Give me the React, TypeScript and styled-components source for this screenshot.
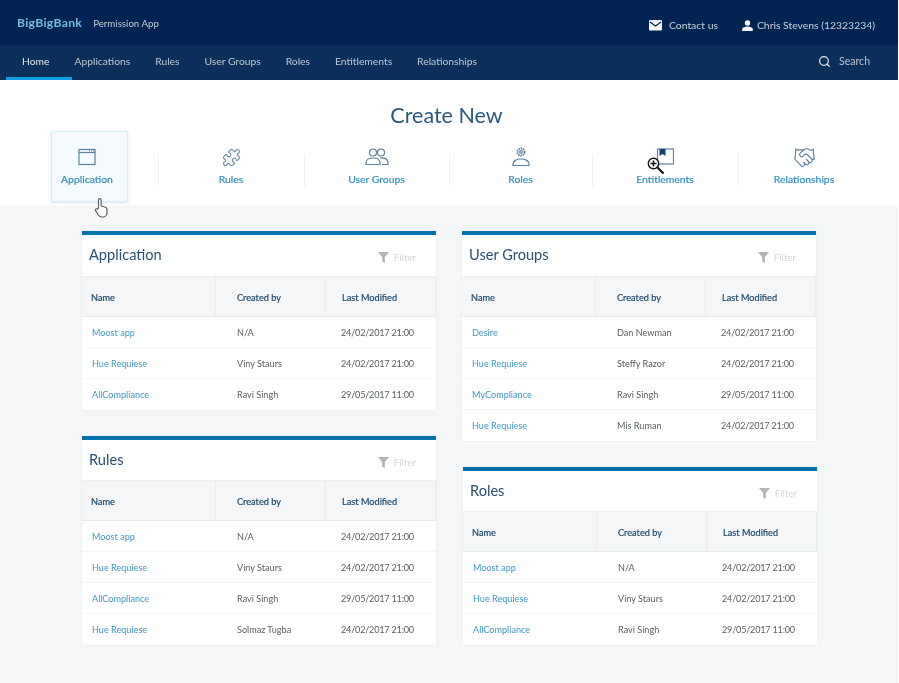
import React from "react";
import styled, { createGlobalStyle } from "styled-components";
import { Search, Handshake, Puzzle } from "lucide-react";

const Global = createGlobalStyle`
  html, body { margin: 0; padding: 0; background: #fff; }
  body { font-family: "Lato", "Open Sans", "Liberation Sans", sans-serif; overflow: hidden; }
  * { box-sizing: border-box; }
`;

const Page = styled.div`
  position: relative;
  width: 898px;
  height: 683px;
  background: #f5f6f7;
  overflow: hidden;
  filter: blur(0.35px);
`;

const TopBar = styled.header`
  height: 45px;
  background: #012452;
  display: flex;
  align-items: center;
  justify-content: space-between;
  padding: 0 23px 0 17px;
`;

const Brand = styled.div`
  display: flex;
  align-items: baseline;
  gap: 11px;
`;

const BrandName = styled.span`
  color: #76bbe4;
  font-size: 12.2px;
  font-weight: 700;
  letter-spacing: 0.3px;
`;

const BrandSub = styled.span`
  color: #c2cedb;
  font-size: 9.7px;
`;

const TopLinks = styled.div`
  display: flex;
  align-items: center;
  gap: 24px;
  margin-top: 5px;
`;

const TopLink = styled.div<{ $gap: number }>`
  display: flex;
  align-items: center;
  gap: ${(p) => p.$gap}px;
  color: #c8d3df;
  font-size: 10.4px;
`;

const NavBar = styled.nav`
  height: 35px;
  background: #0a3059;
  display: flex;
  justify-content: space-between;
  padding: 0 28px 0 6px;
`;

const NavItems = styled.div`
  display: flex;
`;

const NavItem = styled.div<{ $active?: boolean }>`
  height: 35px;
  display: flex;
  align-items: center;
  white-space: nowrap;
  padding: 0 ${(p) => (p.$active ? "23px" : "25px")} 1px ${(p) => (p.$active ? "16px" : "0")};
  margin-right: ${(p) => (p.$active ? "2px" : "0")};
  color: ${(p) => (p.$active ? "#e3e9ef" : "#bcc9d6")};
  font-size: 10.3px;
  border-bottom: 3px solid ${(p) => (p.$active ? "#0fa0e4" : "transparent")};
`;

const SearchBox = styled.div`
  display: flex;
  align-items: center;
  gap: 8px;
  color: #b7c5d3;
  font-size: 10.5px;
  margin-top: -3px;
  svg { color: #e3e9ef; }
`;

const CreatePanel = styled.section`
  height: 126px;
  background: #fff;
  display: flex;
  flex-direction: column;
  align-items: stretch;
`;

const CreateTitle = styled.h1`
  margin: 0;
  height: 51px;
  padding-top: 18px;
  padding-right: 5px;
  text-align: center;
  font-size: 21.5px;
  line-height: 34px;
  font-weight: 400;
  color: #2a5a7e;
`;

const Tiles = styled.div`
  display: grid;
  grid-template-columns: 142px 146px 145px 143px 146px 132px;
  padding-left: 16px;
`;

const TileCell = styled.div<{ $divided?: boolean }>`
  position: relative;
  height: 71px;
  display: flex;
  justify-content: center;
  ${(p) =>
    p.$divided &&
    `&::before {
      content: "";
      position: absolute;
      left: 0;
      top: 23px;
      height: 32px;
      width: 1px;
      background: #eef1f3;
    }`}
`;

const Tile = styled.div<{ $active?: boolean }>`
  width: 77px;
  height: 71px;
  display: flex;
  flex-direction: column;
  align-items: center;
  padding-top: 15px;
  white-space: nowrap;
  color: #3590c0;
  font-size: 10.4px;
  border-radius: 2px;
  -webkit-text-stroke: 0.2px #3590c0;
  ${(p) =>
    p.$active &&
    `background: #f5fafe;
     border: 1px solid #d6eefa;
     box-shadow: 0 1px 3px rgba(120,170,200,.3);
     padding-top: 14px;
     padding-right: 4px;
     margin-left: 4px;`}
`;

const TileIcon = styled.div`
  height: 22px;
  display: flex;
  align-items: center;
  justify-content: center;
  margin-bottom: 5px;
  color: #5f81a0;
`;

const Columns = styled.main`
  display: grid;
  grid-template-columns: 354px 354px;
  column-gap: 26px;
  padding: 25px 0 0 82px;
`;

const Column = styled.div`
  display: flex;
  flex-direction: column;
  align-items: flex-start;
`;

const Card = styled.article<{ $top: number; $shift?: number }>`
  width: 354px;
  margin-top: ${(p) => p.$top}px;
  margin-left: ${(p) => p.$shift ?? 0}px;
  background: #fff;
  border-top: 4px solid #0272ac;
  box-shadow: 0 0 1px rgba(120, 140, 160, 0.25);
`;

const CardHead = styled.div<{ $h: number }>`
  height: ${(p) => p.$h}px;
  display: flex;
  justify-content: space-between;
  padding: 8px 20px 0 7px;
`;

const CardTitle = styled.h2`
  margin: 0;
  font-size: 14.6px;
  line-height: 24px;
  font-weight: 400;
  color: #2a5173;
`;

const FilterBox = styled.div`
  display: flex;
  align-items: center;
  gap: 5px;
  height: 20px;
  margin-top: 4px;
  font-size: 9.7px;
  color: #d3d7da;
`;

const Grid = styled.div`
  display: grid;
  grid-template-columns: 134px 110px 110px;
`;

const HeadCell = styled.div<{ $pad: number }>`
  height: 41px;
  background: #f4f6f8;
  border-top: 1px solid #eef0f2;
  border-bottom: 1px solid #e8edf0;
  border-right: 1px solid #e8edf0;
  display: flex;
  align-items: center;
  padding: 1px 0 0 ${(p) => p.$pad}px;
  font-size: 9.2px;
  color: #1f4a6d;
  -webkit-text-stroke: 0.2px #1f4a6d;
`;

const Cell = styled.div<{ $pad: number; $link?: boolean; $last?: boolean; $date?: boolean }>`
  height: 31px;
  display: flex;
  align-items: center;
  padding-left: ${(p) => p.$pad}px;
  border-bottom: ${(p) => (p.$last ? "none" : "1px solid #f3f5f6")};
  font-size: 9.1px;
  letter-spacing: ${(p) => (p.$date ? "-0.2px" : "0")};
  color: ${(p) => (p.$link ? "#3f98c6" : "#5a6064")};
`;

const Overlay = styled.div<{ $x: number; $y: number }>`
  position: absolute;
  left: ${(p) => p.$x}px;
  top: ${(p) => p.$y}px;
  line-height: 0;
`;

const MailIcon = () => (
  <svg width="13" height="11" viewBox="0 0 13 11">
    <rect width="13" height="10.5" rx="1" fill="#f3f5f7" />
    <path d="M1 2l5.5 4L12 2" fill="none" stroke="#012452" strokeWidth="1.2" />
  </svg>
);

const UserIcon = () => (
  <svg width="11" height="11" viewBox="0 0 11 11" fill="#f3f5f7">
    <circle cx="5.5" cy="3" r="2.7" />
    <path d="M0.2 11V9.2C0.2 7.4 3 6.5 5.5 6.5s5.3.9 5.3 2.7V11z" />
  </svg>
);

const WindowIcon = () => (
  <svg width="18" height="18" viewBox="0 0 18 18" fill="none" stroke="#5f81a0" strokeWidth="1.2">
    <rect x="1" y="1.5" width="16" height="15" />
    <path d="M1 4.5h16" />
    <path d="M11 3h1M13 3h1M15 3h1" />
  </svg>
);

const GroupIcon = () => (
  <svg width="24" height="18" viewBox="0 0 24 18" fill="none" stroke="#5f81a0" strokeWidth="1.2">
    <circle cx="8" cy="4.5" r="3.5" />
    <circle cx="16" cy="4.5" r="3.5" />
    <path d="M1 16.5v-2c0-3 3.5-4.5 7-4.5s7 1.5 7 4.5v2z" />
    <path d="M15 10c4-.8 8 1 8 4.5v2h-6" />
  </svg>
);

const RoleIcon = () => (
  <svg width="18" height="20" viewBox="0 0 18 20" fill="none" stroke="#5f81a0" strokeWidth="1.2">
    <circle cx="9" cy="5" r="3.6" strokeWidth="1.8" strokeDasharray="1.6 .7" />
    <circle cx="9" cy="5" r="1.3" />
    <path d="M1 18.5v-1.5c0-3 3.5-5 8-5s8 2 8 5v1.5z" />
  </svg>
);

const EntitlementIcon = () => (
  <svg width="18" height="18" viewBox="0 0 18 18">
    <rect x="1.5" y="1" width="16" height="15" fill="none" stroke="#5f81a0" strokeWidth="1.2" />
    <path d="M3.5 1h6v7l-3-2-3 2z" fill="#123f6d" />
  </svg>
);

const FilterIcon = () => (
  <svg width="11" height="11" viewBox="0 0 11 11" fill="#aeb4b8">
    <path d="M0 0h11L6.8 5v6L4.2 9.5V5z" />
  </svg>
);

const HandCursor = () => (
  <svg width="15" height="21" viewBox="0 0 15 21" fill="#fff" stroke="#5a5e61" strokeWidth="1.2" strokeLinejoin="round">
    <path d="M4.5 10V2a1.3 1.3 0 0 1 2.6 0v6l3.6 1c1.600.4 2.300 1 2.300 2.500v3c0 2.500-1.800 4.500-4 4.500H7.500c-1.500 0-2.300-.7-3.200-2L1.500 12.500c-.7-1.100.6-2.200 1.600-1.300z" />
  </svg>
);

const ZoomCursor = () => (
  <svg width="18" height="18" viewBox="0 0 18 18">
    <circle cx="6.5" cy="6.5" r="5.2" fill="#fff" stroke="#111" strokeWidth="1.4" />
    <path d="M6.5 3.5v6M3.5 6.5h6" stroke="#111" strokeWidth="1.6" />
    <path d="M10.5 10.5l6 6" stroke="#111" strokeWidth="2.2" />
  </svg>
);

type Row = [string, string, string];
const D1 = "24/02/2017 21:00";
const D2 = "29/05/2017 11:00";

const Table = ({
  title,
  rows,
  top,
  shift,
  headH = 41,
}: {
  title: string;
  rows: Row[];
  top: number;
  shift?: number;
  headH?: number;
}) => (
  <Card $top={top} $shift={shift}>
    <CardHead $h={headH}>
      <CardTitle>{title}</CardTitle>
      <FilterBox>
        <FilterIcon />
        Filter
      </FilterBox>
    </CardHead>
    <Grid>
      <HeadCell $pad={9}>Name</HeadCell>
      <HeadCell $pad={21}>Created by</HeadCell>
      <HeadCell $pad={16}>Last Modified</HeadCell>
      {rows.map((r, i) => (
        <React.Fragment key={i}>
          <Cell $pad={10} $link $last={i === rows.length - 1}>
            {r[0]}
          </Cell>
          <Cell $pad={21} $last={i === rows.length - 1}>
            {r[1]}
          </Cell>
          <Cell $pad={15} $date $last={i === rows.length - 1}>
            {r[2]}
          </Cell>
        </React.Fragment>
      ))}
    </Grid>
  </Card>
);

const navs = ["Home", "Applications", "Rules", "User Groups", "Roles", "Entitlements", "Relationships"];

const tiles: [string, React.ReactNode][] = [
  ["Application", <WindowIcon />],
  ["Rules", <Puzzle size={19} strokeWidth={1.3} />],
  ["User Groups", <GroupIcon />],
  ["Roles", <RoleIcon />],
  ["Entitlements", <EntitlementIcon />],
  ["Relationships", <Handshake size={23} strokeWidth={1.2} />],
];

export default function App() {
  return (
    <Page>
      <Global />
      <TopBar>
        <Brand>
          <BrandName>BigBigBank</BrandName>
          <BrandSub>Permission App</BrandSub>
        </Brand>
        <TopLinks>
          <TopLink $gap={7}>
            <MailIcon />
            Contact us
          </TopLink>
          <TopLink $gap={4}>
            <UserIcon />
            Chris Stevens (12323234)
          </TopLink>
        </TopLinks>
      </TopBar>
      <NavBar>
        <NavItems>
          {navs.map((label, i) => (
            <NavItem key={label} $active={i === 0}>
              {label}
            </NavItem>
          ))}
        </NavItems>
        <SearchBox>
          <Search size={13} strokeWidth={2.2} />
          Search
        </SearchBox>
      </NavBar>
      <CreatePanel>
        <CreateTitle>Create New</CreateTitle>
        <Tiles>
          {tiles.map(([label, icon], i) => (
            <TileCell key={label} $divided={i > 0}>
              <Tile $active={i === 0}>
                <TileIcon>{icon}</TileIcon>
                {label}
              </Tile>
            </TileCell>
          ))}
        </Tiles>
      </CreatePanel>
      <Columns>
        <Column>
          <Table
            title="Application"
            top={0}
            rows={[
              ["Moost app", "N/A", D1],
              ["Hue Requiese", "Viny Staurs", D1],
              ["AllCompliance", "Ravi Singh", D2],
            ]}
          />
          <Table
            title="Rules"
            top={26}
            headH={40}
            rows={[
              ["Moost app", "N/A", D1],
              ["Hue Requiese", "Viny Staurs", D1],
              ["AllCompliance", "Ravi Singh", D2],
              ["Hue Requiese", "Solmaz Tugba", D1],
            ]}
          />
        </Column>
        <Column>
          <Table
            title="User Groups"
            top={0}
            rows={[
              ["Desire", "Dan Newman", D1],
              ["Hue Requiese", "Steffy Razor", D1],
              ["MyCompliance", "Ravi Singh", D2],
              ["Hue Requiese", "Mis Ruman", D1],
            ]}
          />
          <Table
            title="Roles"
            top={26}
            shift={1}
            headH={40}
            rows={[
              ["Moost app", "N/A", D1],
              ["Hue Requiese", "Viny Staurs", D1],
              ["AllCompliance", "Ravi Singh", D2],
            ]}
          />
        </Column>
      </Columns>
      <Overlay $x={94} $y={198}>
        <HandCursor />
      </Overlay>
      <Overlay $x={647} $y={157}>
        <ZoomCursor />
      </Overlay>
    </Page>
  );
}
